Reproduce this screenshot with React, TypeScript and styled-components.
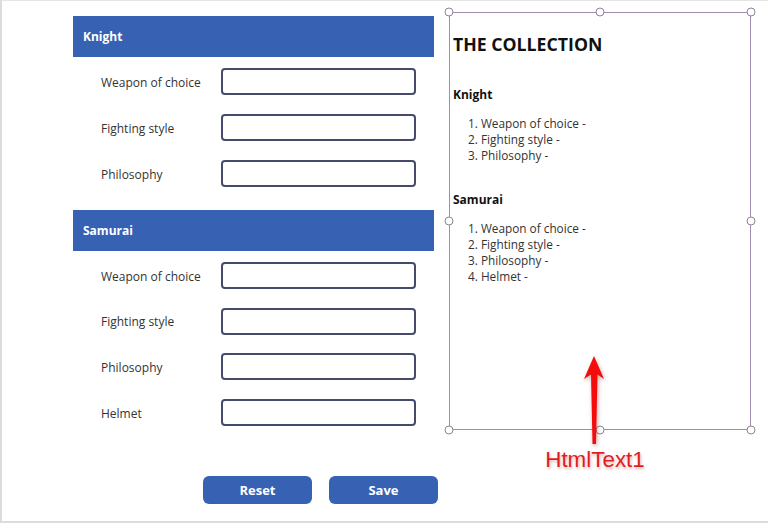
import React from "react";
import styled, { createGlobalStyle } from "styled-components";

const Global = createGlobalStyle`
  html, body { margin: 0; padding: 0; background: #ffffff; }
  body { font-family: "Open Sans", "Noto Sans", Arial, sans-serif; }
  * { box-sizing: border-box; }
`;

const Page = styled.div`
  position: relative;
  width: 768px;
  height: 523px;
  overflow: hidden;
  background: #ffffff;
  border-top: 1px solid #e4e4e4;
  border-left: 2px solid #dcdcdc;
  border-bottom: 2px solid #dcdcdc;
  display: flex;
  align-items: flex-start;
  gap: 15px;
  padding: 11px 0 0 71px;
`;

const FormColumn = styled.div`
  width: 361px;
  padding-top: 4px;
  display: flex;
  flex-direction: column;
`;

const SectionHeader = styled.div<{ $gap?: number }>`
  height: 41px;
  margin-top: ${(p) => p.$gap ?? 0}px;
  background: #3761b3;
  color: #ffffff;
  font-weight: 700;
  font-size: 12px;
  display: flex;
  align-items: center;
  padding-left: 10px;
`;

const Rows = styled.div<{ $gap: number }>`
  display: flex;
  flex-direction: column;
  gap: ${(p) => p.$gap}px;
  padding-top: 11px;
`;

const Row = styled.div`
  display: flex;
  align-items: center;
  height: 27px;
`;

const Label = styled.div`
  width: 148px;
  padding-left: 28px;
  padding-top: 1px;
  font-size: 12px;
  color: #333333;
`;

const Input = styled.div`
  width: 195px;
  height: 27px;
  border: 2px solid #464b6c;
  border-radius: 4px;
  background: #ffffff;
`;

const Buttons = styled.div`
  display: flex;
  gap: 17px;
  margin-top: 50px;
  padding-left: 130px;
`;

const Button = styled.div`
  width: 109px;
  height: 28px;
  flex-shrink: 0;
  border-radius: 6px;
  background: #3761b3;
  color: #ffffff;
  font-weight: 700;
  font-size: 13px;
  display: flex;
  align-items: center;
  justify-content: center;
`;

const HtmlBox = styled.div`
  position: relative;
  width: 302px;
  height: 418px;
  border: 1px solid #a08daf;
  padding: 19px 3px 0 3px;
  color: #222222;
`;

const Handle = styled.span<{ $x: string; $y: string }>`
  position: absolute;
  left: ${(p) => p.$x};
  top: ${(p) => p.$y};
  width: 9px;
  height: 9px;
  border-radius: 50%;
  border: 1px solid #8e8599;
  background: #ffffff;
  transform: translate(-50%, -50%);
`;

const Title = styled.div`
  font-size: 17.7px;
  font-weight: 700;
  line-height: 24px;
  color: #111111;
`;

const SubTitle = styled.div<{ $gap: number }>`
  margin-top: ${(p) => p.$gap}px;
  font-size: 12px;
  font-weight: 700;
  line-height: 16px;
  color: #111111;
`;

const List = styled.ol`
  margin: 12px 0 0 0;
  padding: 0 0 0 15px;
  list-style-position: inside;
  font-size: 11.8px;
  line-height: 16px;
  color: #333333;
`;

const Annotation = styled.div`
  position: absolute;
  left: 538px;
  top: 350px;
  width: 110px;
  display: flex;
  flex-direction: column;
  align-items: center;
`;

const ArrowSvg = styled.svg`
  display: block;
  margin-left: -3px;
  filter: drop-shadow(1px 2px 2px rgba(120, 0, 0, 0.35));
`;

const AnnotationText = styled.div`
  margin-top: 2px;
  font-family: "Liberation Sans", Arial, sans-serif;
  font-size: 22.4px;
  line-height: 26px;
  color: #df1f1f;
  text-shadow: 1px 2px 3px rgba(160, 0, 0, 0.3);
`;

const knight = ["Weapon of choice", "Fighting style", "Philosophy"];
const samurai = ["Weapon of choice", "Fighting style", "Philosophy", "Helmet"];

const handles: [string, string][] = [
  ["-1px", "-1px"],
  ["50%", "-1px"],
  ["calc(100% + 1px)", "-1px"],
  ["-1px", "50%"],
  ["calc(100% + 1px)", "50%"],
  ["-1px", "calc(100% + 1px)"],
  ["50%", "calc(100% + 1px)"],
  ["calc(100% + 1px)", "calc(100% + 1px)"],
];

export default function App() {
  return (
    <>
      <Global />
      <Page>
        <FormColumn>
          <SectionHeader>Knight</SectionHeader>
          <Rows $gap={19}>
            {knight.map((l) => (
              <Row key={l}>
                <Label>{l}</Label>
                <Input />
              </Row>
            ))}
          </Rows>
          <SectionHeader $gap={23}>Samurai</SectionHeader>
          <Rows $gap={18.7}>
            {samurai.map((l) => (
              <Row key={l}>
                <Label>{l}</Label>
                <Input />
              </Row>
            ))}
          </Rows>
          <Buttons>
            <Button>Reset</Button>
            <Button>Save</Button>
          </Buttons>
        </FormColumn>
        <HtmlBox>
          {handles.map(([x, y], i) => (
            <Handle key={i} $x={x} $y={y} />
          ))}
          <Title>THE COLLECTION</Title>
          <SubTitle $gap={31}>Knight</SubTitle>
          <List>
            {knight.map((l) => (
              <li key={l}>{l} -</li>
            ))}
          </List>
          <SubTitle $gap={29}>Samurai</SubTitle>
          <List>
            {samurai.map((l) => (
              <li key={l}>{l} -</li>
            ))}
          </List>
        </HtmlBox>
        <Annotation>
          <ArrowSvg width="30" height="94" viewBox="0 0 30 94">
            <polygon
              points="15,5 25,28 18.5,23.5 17,93 13.5,93 12,23.5 5,28"
              fill="#f40b0b"
            />
          </ArrowSvg>
          <AnnotationText>HtmlText1</AnnotationText>
        </Annotation>
      </Page>
    </>
  );
}
